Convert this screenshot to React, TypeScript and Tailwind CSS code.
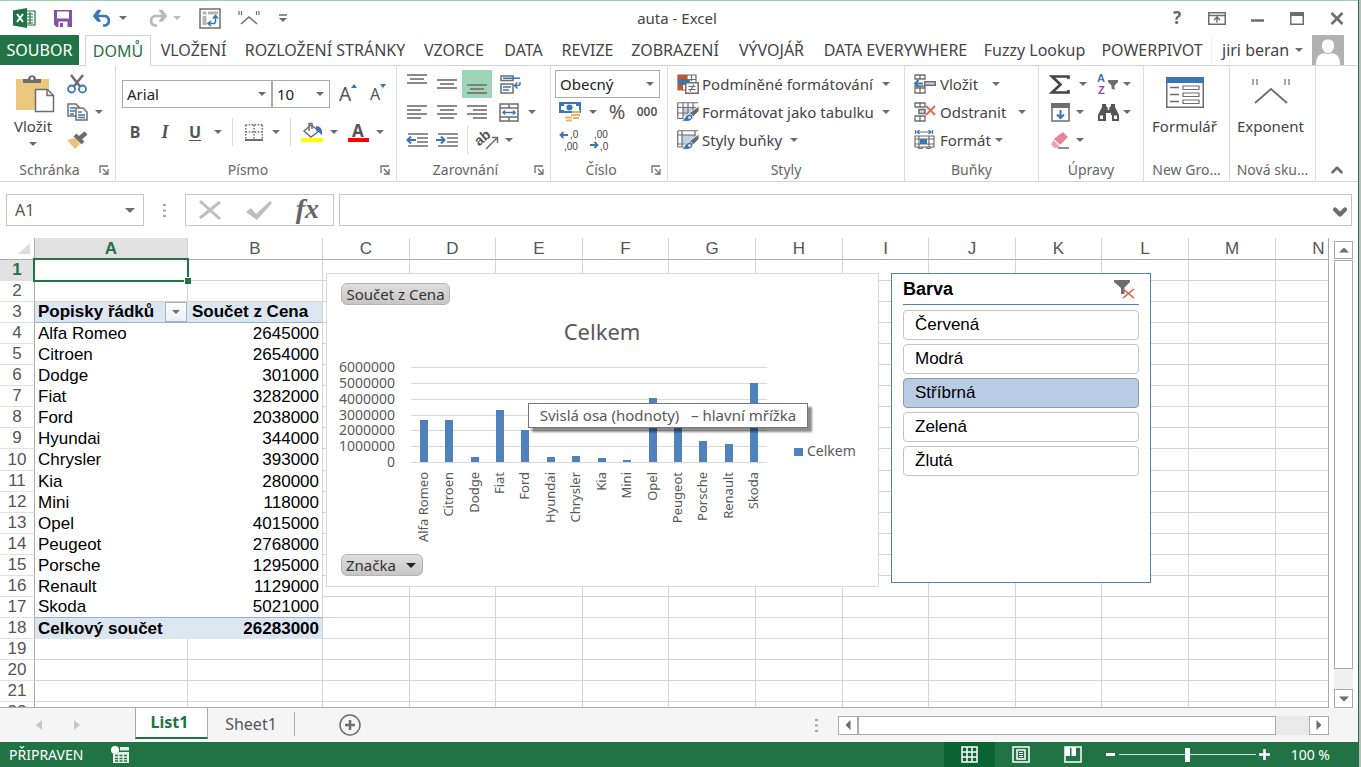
import React from 'react';
import { ChevronDown, ChevronUp } from 'lucide-react';

const GREY = '#6d6d6d';
const BLUE = '#3a76b5';

const Svg: React.FC<{ w: number; h: number; children: React.ReactNode; className?: string }> = ({
  w,
  h,
  children,
  className = '',
}) => (
  <svg
    width={w}
    height={h}
    viewBox={`0 0 ${w} ${h}`}
    fill="none"
    stroke={GREY}
    strokeWidth="1.5"
    className={`shrink-0 overflow-visible ${className}`}
    aria-hidden="true"
  >
    {children}
  </svg>
);

const Arrow: React.FC<{ className?: string }> = ({ className = 'text-[#6d6d6d]' }) => (
  <svg width="8" height="4" viewBox="0 0 8 4" fill="currentColor" className={`shrink-0 ${className}`} aria-hidden="true">
    <path d="M0 0h8L4 4z" />
  </svg>
);

const Tool: React.FC<{ label: string; className?: string; children: React.ReactNode }> = ({
  label,
  className = 'w-[30px]',
  children,
}) => (
  <button type="button" aria-label={label} className={`flex h-7 shrink-0 items-center justify-center ${className}`}>
    {children}
  </button>
);

const Group: React.FC<{ label: string; launcher?: boolean; className: string; children: React.ReactNode }> = ({
  label,
  launcher,
  className,
  children,
}) => (
  <section aria-label={label} className={`flex shrink-0 flex-col border-r border-[#dcdcdc] pb-px ${className}`}>
    <div className="flex-1">{children}</div>
    <div className="flex h-5 items-center text-[14px] leading-5 text-[#666]">
      <span className="flex-1 text-center whitespace-nowrap">{label}</span>
      {launcher && (
        <button type="button" aria-label={`${label} – další možnosti`} className="mr-1 w-3">
          <Svg w={10} h={10}>
            <path d="M1 8V1h8M4 4l4 4M9 4v5H4" strokeWidth="1.3" />
          </Svg>
        </button>
      )}
    </div>
  </section>
);

const Divider = ({ className = '' }) => <span className={`h-7 w-px shrink-0 bg-[#dcdcdc] ${className}`} />;

const Lines: React.FC<{ rows: [number, number, number][]; h?: number }> = ({ rows, h = 18 }) => (
  <Svg w={20} h={h}>
    {rows.map(([x1, x2, y]) => (
      <path key={y} d={`M${x1} ${y}H${x2}`} strokeWidth="1.6" />
    ))}
  </Svg>
);

const Combo: React.FC<{ label: string; value: string; className: string }> = ({ label, value, className }) => (
  <div className={`relative h-7 shrink-0 ${className}`}>
    <select
      aria-label={label}
      defaultValue={value}
      className="h-full w-full appearance-none border border-[#ababab] bg-white pl-1 text-[15px] leading-5 text-[#222]"
    >
      <option>{value}</option>
    </select>
    <Arrow className="pointer-events-none absolute top-3 right-1.5 text-[#6d6d6d]" />
  </div>
);

/* ---------- title bar ---------- */

const TitleBar = () => (
  <header className="grid h-[35px] shrink-0 grid-cols-[1fr_auto_1fr] items-center border-t border-[#9bd0b4] pr-1">
    <div className="flex items-center pl-[13px]">
      <Svg w={23} h={20}>
        <path d="M12 3h10v14H12" stroke="#217346" strokeWidth="1.2" fill="#fff" />
        <path d="M14 6h6M14 9h6M14 12h6M14 15h6M17 4v12" stroke="#217346" strokeWidth="1.2" />
        <path d="M0 2.500L14 0v20L0 17.500z" fill="#217346" stroke="none" />
        <path d="M4 6l6 8M10 6l-6 8" stroke="#fff" strokeWidth="2" />
      </Svg>
      <Tool label="Uložit" className="ml-[17px] w-5">
        <Svg w={20} h={19}>
          <path d="M1 1h18v17H3.500L1 15.500z" fill="#8450a8" stroke="none" />
          <path d="M4 2.500h12v7H4z" fill="#fff" stroke="none" />
          <path d="M5.500 12.500h9V18h-9z" fill="#fff" stroke="none" />
          <path d="M7 14h3v4H7z" fill="#8450a8" stroke="none" />
        </Svg>
      </Tool>
      <Tool label="Zpět" className="ml-5 w-5">
        <Svg w={20} h={17}>
          <path d="M3 6h9.500a5 5 0 0 1 0 9.500H10" stroke={BLUE} strokeWidth="2.500" />
          <path d="M8 0H4.500L0 6l4.500 5.500H8L4.500 6z" fill={BLUE} stroke={BLUE} strokeWidth="0.500" />
        </Svg>
      </Tool>
      <Tool label="Zpět – seznam" className="ml-1 w-3">
        <Arrow />
      </Tool>
      <Tool label="Znovu" className="ml-[18px] w-5">
        <Svg w={20} h={17}>
          <path d="M17 6H7.500a5 5 0 0 0 0 9.500H10" stroke="#b9b9b9" strokeWidth="2.500" />
          <path d="M12 0h3.500L20 6l-4.500 5.500H12L15.500 6z" fill="#b9b9b9" stroke="#b9b9b9" strokeWidth="0.500" />
        </Svg>
      </Tool>
      <Tool label="Znovu – seznam" className="ml-1 w-3">
        <Arrow className="text-[#b9b9b9]" />
      </Tool>
      <Tool label="Kontingenční tabulka" className="ml-4 w-[22px]">
        <Svg w={22} h={21}>
          <path d="M1 1h20v19H1z" strokeWidth="1.500" />
          <path d="M3.500 3.500h4v3h-4zM9 3.500h10v3H9zM3.500 8h4v9h-4z" fill="#b5b5b5" stroke="none" />
          <path d="M9.500 15.500h5a2 2 0 0 0 2-2V8.500M14 10.500l2.500-3 2.500 3M12 13l-3 2.500 3 2.500" stroke={BLUE} strokeWidth="1.600" />
        </Svg>
      </Tool>
      <Tool label="Exponent" className="ml-4 w-6">
        <Svg w={22} h={14}>
          <path d="M3 13l8-7 8 7" />
          <path d="M1 0v4M3.500 0v4M18.500 0v4M21 0v4" strokeWidth="1.200" />
        </Svg>
      </Tool>
      <Tool label="Přizpůsobit panel" className="ml-[14px] w-4">
        <Svg w={8} h={8}>
          <path d="M0 1h8" />
          <path d="M0 4h8L4 8z" fill={GREY} stroke="none" />
        </Svg>
      </Tool>
    </div>
    <h1 className="text-[15px] leading-5 text-[#444]">auta - Excel</h1>
    <div className="flex items-center justify-end pr-[7px]">
      <Tool label="Nápověda" className="w-5 text-[17px] font-bold text-[#666]">
        ?
      </Tool>
      <Tool label="Možnosti zobrazení pásu karet" className="ml-5 w-5">
        <Svg w={18} h={13}>
          <path d="M.75.75h16.500v11.500H.75zM.75 3.500h16.500M9 10.500V5.500M6 8l3-3 3 3" />
        </Svg>
      </Tool>
      <Tool label="Minimalizovat" className="ml-5 w-5">
        <Svg w={13} h={13}>
          <path d="M0 8.500h13" strokeWidth="2.500" />
        </Svg>
      </Tool>
      <Tool label="Maximalizovat" className="ml-5 w-5">
        <Svg w={14} h={13}>
          <path d="M.75.75h12.500v11.500H.75z" />
          <path d="M0 2h14" strokeWidth="4" />
        </Svg>
      </Tool>
      <Tool label="Zavřít" className="ml-5 w-5">
        <Svg w={14} h={13}>
          <path d="M1.500 1l11 11M12.500 1l-11 11" strokeWidth="2.500" />
        </Svg>
      </Tool>
    </div>
  </header>
);

/* ---------- ribbon tabs ---------- */

const tabs = [
  { name: 'VLOŽENÍ', width: 'w-[85px]' },
  { name: 'ROZLOŽENÍ STRÁNKY', width: 'w-[178px]' },
  { name: 'VZORCE', width: 'w-[80px]' },
  { name: 'DATA', width: 'w-[59px]' },
  { name: 'REVIZE', width: 'w-[69px]' },
  { name: 'ZOBRAZENÍ', width: 'w-[106px]' },
  { name: 'VÝVOJÁŘ', width: 'w-[87px]' },
  { name: 'DATA EVERYWHERE', width: 'w-[161px]' },
  { name: 'Fuzzy Lookup', width: 'w-[117px]' },
  { name: 'POWERPIVOT', width: 'w-[118px]' },
];

const Tabs = () => (
  <nav className="flex h-[31px] shrink-0 text-[16px] leading-5 text-[#444]">
    <button type="button" className="mb-px w-[79px] shrink-0 bg-[#217346] text-white">
      SOUBOR
    </button>
    <span className="w-1.5 shrink-0 border-b border-[#d4d4d4]" />
    <button type="button" className="w-[66px] shrink-0 border border-b-0 border-[#d4d4d4] text-[#217346]">
      DOMŮ
    </button>
    {tabs.map((tab) => (
      <button
        key={tab.name}
        type="button"
        className={`shrink-0 border-b border-[#d4d4d4] whitespace-nowrap ${tab.width}`}
      >
        {tab.name}
      </button>
    ))}
    <div className="flex flex-1 items-center border-b border-l border-b-[#d4d4d4] border-l-[#f0f0f0]">
      <button type="button" className="flex items-center gap-1.5 pl-2.5 whitespace-nowrap">
        jiri beran
        <Arrow />
      </button>
      <Svg w={32} h={30} className="mr-3.5 ml-auto">
        <path d="M0 0h32v30H0z" fill="#b1b1b1" stroke="none" />
        <path d="M4 30c0-9 3-12 12-12s12 3 12 12z" fill="#fff" stroke="none" />
        <path d="M16 4c4 0 6.500 2.500 6.500 6.500S20 18.500 16 18.500 9.500 14.500 9.500 10.500 12 4 16 4z" fill="#fff" stroke="#b1b1b1" strokeWidth="1" />
      </Svg>
    </div>
  </nav>
);

/* ---------- ribbon ---------- */

const ClipboardGroup = () => (
  <Group label="Schránka" launcher className="w-[116px]">
    <div className="flex pt-1">
      <button type="button" className="flex w-[66px] flex-col items-center text-[15px] leading-5 text-[#444]">
        <Svg w={40} h={40} className="mt-1 ml-1">
          <path d="M1 5h33v31H1z" fill="#ecc77f" stroke="none" />
          <path d="M8 9V5h5c0-5 8-5 8 0h5v4z" fill={GREY} stroke="none" />
          <circle cx="17" cy="4.500" r="1.500" fill="#fff" stroke="none" />
          <path d="M20.500 15.500h12l6 6v16h-18z" fill="#fff" />
          <path d="M32 15.500v6h6.500" />
        </Svg>
        <span className="mt-0.5 mb-1.5">Vložit</span>
        <Arrow />
      </button>
      <div>
        <Tool label="Vyjmout" className="w-[22px]">
          <Svg w={20} h={20}>
            <path d="M4 1l9.500 12M16 1L6.500 13" strokeWidth="2.500" />
            <circle cx="4.500" cy="15" r="3.500" stroke={BLUE} strokeWidth="1.800" />
            <circle cx="15.500" cy="15" r="3.500" stroke={BLUE} strokeWidth="1.800" />
          </Svg>
        </Tool>
        <div className="flex">
          <Tool label="Kopírovat" className="w-[22px]">
            <Svg w={21} h={18}>
              <path d="M1 1h8l3 3v9H1z" fill="#fff" />
              <path d="M3 5h5M3 8h5M3 11h4" stroke={BLUE} />
              <path d="M9 5h7l4 4v8H9z" fill="#fff" />
              <path d="M11 9h4M11 12h7M11 14.500h7" stroke={BLUE} />
            </Svg>
          </Tool>
          <Tool label="Kopírovat – možnosti" className="w-[22px]">
            <Arrow />
          </Tool>
        </div>
        <Tool label="Kopírovat formát" className="w-[22px]">
          <Svg w={22} h={18}>
            <path d="M1 9l8-2 5 6-5 5z" fill="#ecc077" stroke="none" />
            <path d="M9 4l8 8" strokeWidth="4" />
            <path d="M14 7l6-5" strokeWidth="4.500" />
          </Svg>
        </Tool>
      </div>
    </div>
  </Group>
);

const FontGroup = () => (
  <Group label="Písmo" launcher className="w-[281px]">
    <div className="flex items-center pt-3.5 pl-1.5">
      <Combo label="Písmo" value="Arial" className="w-[150px]" />
      <Combo label="Velikost písma" value="10" className="w-[58px]" />
      <Tool label="Zvětšit písmo" className="ml-1 w-7 text-[19px] text-[#555]">
        A
        <svg width="6" height="4" viewBox="0 0 6 4" className="mb-4" aria-hidden="true">
          <path d="M0 4h6L3 0z" fill={BLUE} />
        </svg>
      </Tool>
      <Tool label="Zmenšit písmo" className="ml-0.5 w-7 text-[16px] text-[#555]">
        A
        <svg width="6" height="4" viewBox="0 0 6 4" className="mb-4" aria-hidden="true">
          <path d="M0 0h6L3 4z" fill={BLUE} />
        </svg>
      </Tool>
    </div>
    <div className="flex items-center pt-2.5 pl-1 text-[16px] text-[#555]">
      <Tool label="Tučné">
        <b>B</b>
      </Tool>
      <Tool label="Kurzíva">
        <i className="font-['Liberation_Serif',serif] text-[18px] font-bold">I</i>
      </Tool>
      <Tool label="Podtržené">
        <b className="underline underline-offset-2">U</b>
      </Tool>
      <Tool label="Podtržené – možnosti" className="w-4">
        <Arrow />
      </Tool>
      <Divider className="mx-1.5" />
      <Tool label="Ohraničení" className="ml-[3px] w-6">
        <Svg w={18} h={17}>
          <path d="M.75.75h16.500M.75 8h16.500M.75 1v15M9 1v15M17.250 1v15" strokeDasharray="1.500 1.500" />
          <path d="M0 16h18" strokeWidth="2" />
        </Svg>
      </Tool>
      <Tool label="Ohraničení – možnosti" className="w-5">
        <Arrow />
      </Tool>
      <Divider className="mr-2 ml-1" />
      <Tool label="Barva výplně" className="ml-px w-6">
        <Svg w={22} h={20}>
          <path d="M3 9l7-6 8 6-8 6z" fill="#fff" />
          <path d="M8 9V1.500h3V7" />
          <path d="M15 4c4 0 7 3 6 9-2-1-3-4-6-4z" fill={BLUE} stroke="none" />
          <path d="M0 16h22v4H0z" fill="#ff0" stroke="none" />
        </Svg>
      </Tool>
      <Tool label="Barva výplně – možnosti" className="w-5">
        <Arrow />
      </Tool>
      <Tool label="Barva písma" className="w-7 flex-col">
        <b className="text-[17px] leading-[15px]">A</b>
        <span className="h-1 w-[21px] bg-[#f00]" />
      </Tool>
      <Tool label="Barva písma – možnosti" className="w-4">
        <Arrow />
      </Tool>
    </div>
  </Group>
);

const AlignGroup = () => (
  <Group label="Zarovnání" launcher className="w-[154px]">
    <div className="pt-1 pl-[5px]">
      <div className="flex">
        <Tool label="Zarovnat nahoru">
          <Lines rows={[[0, 20, 1], [3, 17, 5], [0, 20, 9]]} h={20} />
        </Tool>
        <Tool label="Zarovnat na střed svisle">
          <Lines rows={[[0, 20, 6], [3, 17, 10], [0, 20, 14]]} h={20} />
        </Tool>
        <Tool label="Zarovnat dolů" className="w-[30px] bg-[#9fd5b7]">
          <Lines rows={[[0, 20, 11], [3, 17, 15], [0, 20, 19]]} h={20} />
        </Tool>
        <Tool label="Zalamovat text" className="ml-1 w-[30px]">
          <Svg w={22} h={19}>
            <path d="M1 1h12v4.500H1zM1 9h12v9H1z" />
            <path d="M3 3.300h17M3 12h8M3 15h6M20 7v1.500a2 2 0 0 1-2 2h-3M17.500 7.500l-3 3 3 3" stroke={BLUE} />
          </Svg>
        </Tool>
      </div>
      <div className="flex">
        <Tool label="Zarovnat vlevo">
          <Lines rows={[[0, 20, 3], [0, 14, 7], [0, 20, 11], [0, 14, 15]]} />
        </Tool>
        <Tool label="Zarovnat na střed">
          <Lines rows={[[0, 20, 3], [3, 17, 7], [0, 20, 11], [3, 17, 15]]} />
        </Tool>
        <Tool label="Zarovnat vpravo">
          <Lines rows={[[0, 20, 3], [6, 20, 7], [0, 20, 11], [6, 20, 15]]} />
        </Tool>
        <Tool label="Sloučit a zarovnat na střed" className="ml-1 w-[26px]">
          <Svg w={20} h={19}>
            <path d="M1 1h18v17H1zM1 5h18M1 14h18M10 1v4M10 14v4" />
            <path d="M4 9.500h12M6 7.500l-2 2 2 2M14 7.500l2 2-2 2" stroke={BLUE} />
          </Svg>
        </Tool>
        <Tool label="Sloučit – možnosti" className="w-5">
          <Arrow />
        </Tool>
      </div>
      <div className="flex items-center">
        <Tool label="Zmenšit odsazení">
          <Svg w={22} h={15}>
            <path d="M2 1h20M11 5h11M11 9h11M2 13h20" />
            <path d="M1 7h9M5 3.500L1.500 7 5 10.500" stroke={BLUE} strokeWidth="2" />
          </Svg>
        </Tool>
        <Tool label="Zvětšit odsazení">
          <Svg w={22} h={15}>
            <path d="M2 1h20M11 5h11M11 9h11M2 13h20" />
            <path d="M0 7h9M5 3.500L8.500 7 5 10.500" stroke={BLUE} strokeWidth="2" />
          </Svg>
        </Tool>
        <Divider className="mx-[5px]" />
        <Tool label="Orientace">
          <Svg w={22} h={20}>
            <text
              x="0"
              y="13"
              transform="rotate(-40 6 12)"
              fill="#555"
              stroke="none"
              className="font-['Liberation_Sans',sans-serif] text-[14px] font-bold"
            >
              ab
            </text>
            <path d="M9 19L20 8M15 7.500h5.500V13" />
          </Svg>
        </Tool>
        <Tool label="Orientace – možnosti" className="w-3">
          <Arrow />
        </Tool>
      </div>
    </div>
  </Group>
);

const NumberGroup = () => (
  <Group label="Číslo" launcher className="w-[117px]">
    <div className="pt-1 pl-1">
      <Combo label="Formát čísla" value="Obecný" className="w-[105px]" />
      <div className="flex items-center text-[#555]">
        <Tool label="Účetní formát">
          <Svg w={22} h={20}>
            <path d="M1 1h20v9H1z" stroke={BLUE} strokeWidth="2" fill="#fff" />
            <path d="M0 0h5v4H0zM17 0h5v4h-5zM0 8h5v3H0z" fill={BLUE} stroke="none" />
            <circle cx="10.500" cy="5.500" r="3" fill={BLUE} stroke="none" />
            <path d="M13 10.500h8M13 13.500h8M6 16h8M6 19h7M15 16.500h5" stroke="#fff" strokeWidth="4" />
            <path d="M13 10h8M12 13h9M6 15.500h7M7 18.500h6M14 16h6" stroke="#e8b566" strokeWidth="2" />
          </Svg>
        </Tool>
        <Tool label="Účetní formát – možnosti" className="w-4">
          <Arrow />
        </Tool>
        <Tool label="Styl procent" className="w-8 text-[20px]">
          %
        </Tool>
        <Tool label="Styl čárky" className="w-7 text-[12px] font-semibold">
          000
        </Tool>
      </div>
      <div className="flex">
        <Tool label="Přidat desetinné místo">
          <Svg w={22} h={22}>
            <path d="M1 6h8M4.500 3L1.500 6l3 3" stroke={BLUE} strokeWidth="1.800" />
            <g fill="#444" stroke="none" className="font-['Liberation_Sans',sans-serif] text-[10px]">
              <text x="11" y="9">,0</text>
              <text x="5" y="21">,00</text>
            </g>
          </Svg>
        </Tool>
        <Tool label="Odebrat desetinné místo">
          <Svg w={22} h={22}>
            <path d="M1 16h8M5.500 13l3 3-3 3" stroke={BLUE} strokeWidth="1.800" />
            <g fill="#444" stroke="none" className="font-['Liberation_Sans',sans-serif] text-[10px]">
              <text x="5" y="9">,00</text>
              <text x="11" y="21">,0</text>
            </g>
          </Svg>
        </Tool>
      </div>
    </div>
  </Group>
);

const Brush = () => (
  <>
    <path d="M22 4v5l-7 7-4-4z" fill={GREY} stroke="#fff" strokeWidth="0.800" />
    <path d="M4 19c4-1 4-7 9-7 5 1 3 7-3 7.500z" fill={BLUE} stroke="#fff" strokeWidth="0.800" />
    <circle cx="12.500" cy="15.500" r="1.300" fill="#fff" stroke="none" />
  </>
);

const StylesGroup = () => (
  <Group label="Styly" className="w-[237px]">
    <div className="pt-1 pl-[9px] text-[15px] leading-5 whitespace-nowrap text-[#444]">
      <button type="button" className="flex h-7 w-[213px] items-center">
        <Svg w={22} h={20} className="mr-[3px]">
          <path d="M1 1h18v15H1zM10 1v15M14.500 1v6M1 5.500h18M1 10.500h9" strokeWidth="1.200" />
          <path d="M1 1h9v4H1z" fill="#d0502b" stroke="none" />
          <path d="M1 6h12v4H1z" fill={BLUE} stroke="none" />
          <path d="M1 11h5v5H1z" fill="#d0502b" stroke="none" />
          <path d="M8.750 8.750h12.500v10.500H8.750z" fill="#fff" />
          <path d="M11.500 12.500h7M11.500 15.500h7M17 10.500l-4 7" strokeWidth="1.200" />
        </Svg>
        Podmíněné formátování
        <Arrow className="ml-auto text-[#6d6d6d]" />
      </button>
      <button type="button" className="flex h-7 w-[213px] items-center">
        <Svg w={22} h={20} className="mr-[3px]">
          <path d="M6 6h12v8H6z" fill="#bdd2ea" stroke="none" />
          <path d="M.75.75h20.500M.75 16.500V.75M.75 5.500h18M.75 11h12M.75 16.500h6M6 1v15M11 1v12M16 1v8" strokeWidth="1.200" />
          <Brush />
        </Svg>
        Formátovat jako tabulku
        <Arrow className="ml-auto text-[#6d6d6d]" />
      </button>
      <button type="button" className="flex h-7 items-center">
        <Svg w={22} h={20} className="mr-[3px]">
          <path d="M5 5h13v8H5z" fill="#bdd2ea" stroke="none" />
          <path d="M.75.75h20.500M.75 17V.75M.75 5h18M.75 14h9M.75 17h6M5 1v16M18 1v7" strokeWidth="1.200" />
          <Brush />
        </Svg>
        Styly buňky
        <Arrow className="ml-2 text-[#6d6d6d]" />
      </button>
    </div>
  </Group>
);

const CellsGroup = () => (
  <Group label="Buňky" className="w-[134px]">
    <div className="pt-1 pl-[9px] text-[15px] leading-5 whitespace-nowrap text-[#444]">
      <button type="button" className="flex h-7 items-center">
        <Svg w={22} h={20} className="mr-1">
          <path d="M1 1h10v4H1zM6 1v4M1 14h10v5H1zM6 12v7M1 14v-2h10v2" strokeWidth="1.300" />
          <path d="M10.750 7.750h10.500v3.500H10.750z" fill="#c5d8ec" />
          <path d="M1 9.500h8M4.500 6L1 9.500 4.500 13" stroke={BLUE} strokeWidth="2" />
        </Svg>
        Vložit
        <Arrow className="ml-3.5 text-[#6d6d6d]" />
      </button>
      <button type="button" className="flex h-7 items-center">
        <Svg w={22} h={20} className="mr-1">
          <path d="M1 1h10v4H1zM6 1v4M1 14h10v5H1zM6 14v5" strokeWidth="1.300" />
          <path d="M5 7.500h6v4H5z" fill="#c5d8ec" />
          <path d="M12 4l9 9M21 4l-9 9" stroke="#e0694a" strokeWidth="1.800" />
        </Svg>
        Odstranit
        <Arrow className="ml-3 text-[#6d6d6d]" />
      </button>
      <button type="button" className="flex h-7 items-center">
        <Svg w={22} h={20} className="mr-1">
          <path d="M1.500 0v4M18.500 0v4M3 2h14M5.500 0L3 2l2.500 2M14.500 0L17 2l-2.500 2" stroke={BLUE} strokeWidth="1.200" />
          <path d="M1 6h19v11H1zM1 9h19M1 14h19M5 6v11M15 6v11M4 17c0 2 5 2 5 0M12 17c0 2 5 2 5 0" strokeWidth="1.200" />
          <path d="M6 9h7v5H6z" fill={BLUE} stroke="none" />
        </Svg>
        Formát
        <Arrow className="ml-1 text-[#6d6d6d]" />
      </button>
    </div>
  </Group>
);

const EditGroup = () => (
  <Group label="Úpravy" className="w-[105px]">
    <div className="pt-1 pl-1.5">
      <div className="flex">
        <Tool label="Automatické shrnutí">
          <Svg w={20} h={19}>
            <path d="M18.500 4V1.500H2L10.500 9.500 2 17.500h16.500V15" stroke="#444" strokeWidth="2.600" />
          </Svg>
        </Tool>
        <Tool label="Shrnutí – možnosti" className="w-4">
          <Arrow />
        </Tool>
        <Tool label="Seřadit a filtrovat" className="ml-1 w-[26px]">
          <Svg w={22} h={22}>
            <g stroke="none" className="font-['Liberation_Sans',sans-serif] text-[11px] font-bold">
              <text x="0" y="9" fill={BLUE}>A</text>
              <text x="1" y="21" fill="#8450a8">Z</text>
            </g>
            <path d="M11 7h10v2l-3.500 3.500V17l-3-1.500v-3L11 9z" fill={GREY} stroke="none" />
          </Svg>
        </Tool>
        <Tool label="Seřadit – možnosti" className="w-3">
          <Arrow />
        </Tool>
      </div>
      <div className="flex">
        <Tool label="Vyplnit">
          <Svg w={19} h={19}>
            <path d="M1 1h17v17H1z" />
            <path d="M0 0h19v5H0z" fill={GREY} stroke="none" />
            <path d="M9.500 7v8M6 11.500l3.500 3.500 3.500-3.500" stroke={BLUE} strokeWidth="2" />
          </Svg>
        </Tool>
        <Tool label="Vyplnit – možnosti" className="w-2.5">
          <Arrow />
        </Tool>
        <Tool label="Najít a vybrat" className="ml-2.5 w-[26px]">
          <Svg w={21} h={17}>
            <path d="M4 0h4v2l2 2h1l2-2V0h4v3l4 8v6h-7v-6h-1v-2h-5v2H8v6H0v-6l4-8z" fill="#555" stroke="none" />
            <path d="M2 11.500h3V15H2zM16 11.500h3V15h-3z" fill="#fff" stroke="none" />
            <path d="M10.500 4v2" stroke="#fff" />
          </Svg>
        </Tool>
        <Tool label="Najít – možnosti" className="w-3">
          <Arrow />
        </Tool>
      </div>
      <div className="flex">
        <Tool label="Vymazat">
          <Svg w={20} h={17}>
            <path d="M9 3l4-3 5 5-8 8-6-6z" fill="#e58494" stroke="none" />
            <path d="M3.500 8l6 6-2 2H4.500L1 12.500z" fill="#eba6b1" stroke="none" />
            <path d="M8 16h11" />
          </Svg>
        </Tool>
        <Tool label="Vymazat – možnosti" className="w-2.5">
          <Arrow />
        </Tool>
      </div>
    </div>
  </Group>
);

const Ribbon = () => (
  <div className="flex h-[116px] shrink-0 border-b border-[#d4d4d4]">
    <ClipboardGroup />
    <FontGroup />
    <AlignGroup />
    <NumberGroup />
    <StylesGroup />
    <CellsGroup />
    <EditGroup />
    <Group label="New Gro..." className="w-[86px]">
      <button type="button" className="flex w-full flex-col items-center pt-[11px] pr-1 text-[15px] leading-5 text-[#444]">
        <Svg w={38} h={31}>
          <path d="M.75.75h36.500v29.500H.75z" fill="#fff" />
          <path d="M0 0h38v6H0z" fill={BLUE} stroke="none" />
          <path d="M4 10.500h9M4 17.500h9M4 24.500h9" />
          <path d="M17 9h16v3.500H17zM17 16h16v3.500H17zM17 23h16v3.500H17z" strokeWidth="1.200" />
        </Svg>
        <span className="mt-2">Formulář</span>
      </button>
    </Group>
    <Group label="Nová sku..." className="w-[86px]">
      <button type="button" className="flex w-full flex-col items-center pt-[11px] pr-1 text-[15px] leading-5 text-[#444]">
        <Svg w={38} h={31}>
          <path d="M3 26l16-14 16 14" strokeWidth="1.800" />
          <path d="M1 2v6M5 2v6M33 2v6M37 2v6" strokeWidth="1.200" />
        </Svg>
        <span className="mt-2">Exponent</span>
      </button>
    </Group>
    <button type="button" aria-label="Sbalit pás karet" className="mt-auto mr-3 mb-0.5 ml-auto">
      <ChevronUp size={18} strokeWidth={3.5} color={GREY} />
    </button>
  </div>
);

const Dots = ({ className = '' }) => (
  <svg width="3" height="13" viewBox="0 0 3 13" fill="#a5a5a5" className={`shrink-0 ${className}`} aria-hidden="true">
    <path d="M0 0h3v2H0zM0 5.500h3v2H0zM0 11h3v2H0z" />
  </svg>
);

const FormulaBar = () => (
  <div className="flex h-14 shrink-0 items-start pt-3 pr-1.5 pl-1.5">
    <label className="flex h-8 w-[138px] items-center border border-[#c6c6c6] pr-2">
      <input
        aria-label="Pole názvů"
        defaultValue="A1"
        className="w-full min-w-0 pl-2 text-[16px] leading-5 text-[#555] outline-none"
      />
      <svg width="10" height="5" viewBox="0 0 10 5" fill={GREY} className="shrink-0" aria-hidden="true">
        <path d="M0 0h10L5 5z" />
      </svg>
    </label>
    <Dots className="mx-[19px] mt-2.5" />
    <div className="flex h-8 w-[149px] shrink-0 items-center justify-between border border-[#c6c6c6] pr-3.5 pl-3">
      <button type="button" aria-label="Storno">
        <Svg w={24} h={20}>
          <path d="M2 1l20 18M22 2L2 18" stroke="#bdbdbd" strokeWidth="3" />
        </Svg>
      </button>
      <button type="button" aria-label="Zadat">
        <Svg w={26} h={20}>
          <path d="M0 12l5-4 5 6L24 1l2 2-15 17z" fill="#bdbdbd" stroke="none" />
        </Svg>
      </button>
      <button
        type="button"
        aria-label="Vložit funkci"
        className="pb-0.5 font-['Liberation_Serif',serif] text-[28px] leading-7 font-bold text-[#666] italic"
      >
        fx
      </button>
    </div>
    <div className="ml-[5px] flex h-8 flex-1 items-center border border-[#c6c6c6]">
      <input aria-label="Řádek vzorců" className="h-full min-w-0 flex-1 px-2 text-[15px] outline-none" />
      <button type="button" aria-label="Rozbalit řádek vzorců" className="mr-px pt-1">
        <ChevronDown size={20} strokeWidth={5} color={GREY} />
      </button>
    </div>
  </div>
);

/* ---------- sheet ---------- */

const columns = [
  { name: 'A', width: 'w-[153px]' },
  { name: 'B', width: 'w-[135px]' },
  { name: 'C', width: 'w-[87px]' },
  { name: 'D', width: 'w-[86px]' },
  { name: 'E', width: 'w-[87px]' },
  { name: 'F', width: 'w-[86px]' },
  { name: 'G', width: 'w-[87px]' },
  { name: 'H', width: 'w-[87px]' },
  { name: 'I', width: 'w-[86px]' },
  { name: 'J', width: 'w-[87px]' },
  { name: 'K', width: 'w-[86px]' },
  { name: 'L', width: 'w-[87px]' },
  { name: 'M', width: 'w-[87px]' },
  { name: 'N', width: 'w-[86px]' },
];

const sales = [
  { brand: 'Alfa Romeo', total: 2645000 },
  { brand: 'Citroen', total: 2654000 },
  { brand: 'Dodge', total: 301000 },
  { brand: 'Fiat', total: 3282000 },
  { brand: 'Ford', total: 2038000 },
  { brand: 'Hyundai', total: 344000 },
  { brand: 'Chrysler', total: 393000 },
  { brand: 'Kia', total: 280000 },
  { brand: 'Mini', total: 118000 },
  { brand: 'Opel', total: 4015000 },
  { brand: 'Peugeot', total: 2768000 },
  { brand: 'Porsche', total: 1295000 },
  { brand: 'Renault', total: 1129000 },
  { brand: 'Skoda', total: 5021000 },
];

const blankCell = 'border-r border-b border-[#d4d4d4]';

const PivotCells: React.FC<{ row: number }> = ({ row }) => {
  if (row === 1) {
    return (
      <>
        <td className={`relative ${blankCell}`}>
          <span className="absolute -inset-0.5 border-2 border-[#217346]" />
          <span className="absolute -right-1 -bottom-1 size-[7px] border-t border-l border-white bg-[#217346]" />
        </td>
        <td className={blankCell} />
      </>
    );
  }
  if (row === 3) {
    return (
      <>
        <td className="border-b border-[#95b3d7] bg-[#dce6f1] py-0 pr-0 pl-[3px] font-bold">
          <div className="flex h-5 items-center justify-between">
            Popisky řádků
            <button
              type="button"
              aria-label="Filtr řádků"
              className="mr-px flex h-5 w-[22px] items-center justify-center border border-[#a9b4c2] bg-gradient-to-b from-white to-[#eceff3]"
            >
              <Arrow />
            </button>
          </div>
        </td>
        <td className="border-r border-b border-[#95b3d7] border-r-[#d4d4d4] bg-[#dce6f1] pl-1 font-bold">
          Součet z Cena
        </td>
      </>
    );
  }
  if (row >= 4 && row <= 17) {
    const { brand, total } = sales[row - 4];
    const line = row === 17 ? 'border-b border-b-[#95b3d7]' : '';
    return (
      <>
        <td className={`pl-[3px] ${line}`}>{brand}</td>
        <td className={`border-r border-r-[#d4d4d4] pr-[3px] text-right ${line}`}>{total}</td>
      </>
    );
  }
  if (row === 18) {
    return (
      <>
        <td className="bg-[#dce6f1] pl-[3px] font-bold">Celkový součet</td>
        <td className="border-r border-r-[#d4d4d4] bg-[#dce6f1] pr-[3px] text-right font-bold">26283000</td>
      </>
    );
  }
  return (
    <>
      <td className={blankCell} />
      <td className={blankCell} />
    </>
  );
};

const Grid = () => (
  <table className="w-[1362px] table-fixed border-separate border-spacing-0 font-['Liberation_Sans',Arial,sans-serif] text-[17px] leading-5 whitespace-nowrap text-black">
    <colgroup>
      <col className="w-[35px]" />
      {columns.map((c) => (
        <col key={c.name} className={c.width} />
      ))}
    </colgroup>
    <thead>
      <tr>
        <th className="h-[22px] border-r border-b border-[#ababab] p-0">
          <svg width="12" height="11" viewBox="0 0 12 11" className="mr-1 ml-auto" aria-hidden="true">
            <path d="M12 0v11H0z" fill="#dcdcdc" />
          </svg>
        </th>
        {columns.map((c) => (
          <th
            key={c.name}
            scope="col"
            className={`h-[22px] border-r border-b border-r-[#d4d4d4] border-b-[#ababab] p-0 ${
              c.name === 'A' ? 'bg-[#e1e1e1] font-bold text-[#217346]' : 'font-normal text-[#555]'
            }`}
          >
            {c.name}
          </th>
        ))}
      </tr>
    </thead>
    <tbody>
      {Array.from({ length: 22 }, (_, i) => i + 1).map((row) => (
        <tr key={row}>
          <th
            scope="row"
            className={`border-r border-b border-r-[#ababab] border-b-[#e1e1e1] p-0 ${
              row === 10 ? 'h-[22px]' : 'h-[21px]'
            } ${row === 1 ? 'bg-[#e1e1e1] font-bold text-[#217346]' : 'font-normal text-[#555]'}`}
          >
            {row}
          </th>
          <PivotCells row={row} />
          {columns.slice(2).map((c) => (
            <td key={c.name} className={blankCell} />
          ))}
        </tr>
      ))}
    </tbody>
  </table>
);

const ticks = [6000000, 5000000, 4000000, 3000000, 2000000, 1000000, 0];
const plot = { left: 84, right: 440, top: 94, bottom: 189 };
const step = (plot.right - plot.left) / sales.length;

const PivotChart = () => (
  <figure className="absolute top-[35px] left-[326px] h-[314px] w-[553px] border border-[#d9d9d9] bg-white">
    <svg width="551" height="312" viewBox="0 0 551 312" className="font-['Noto_Sans',sans-serif]" role="img" aria-label="Celkem">
      <text x="275" y="66" textAnchor="middle" fill="#595959" className="text-[22px]">
        Celkem
      </text>
      {ticks.map((tick) => {
        const y = Math.round(plot.bottom - (tick / 6000000) * (plot.bottom - plot.top)) - 0.5;
        return (
          <g key={tick}>
            <path d={`M${plot.left} ${y}H${plot.right}`} stroke="#d9d9d9" />
            <text x="68" y={y + 4} textAnchor="end" fill="#595959" className="text-[14px]">
              {tick}
            </text>
          </g>
        );
      })}
      {sales.map(({ brand, total }, i) => {
        const x = Math.round(plot.left + step * (i + 0.5));
        const h = Math.max(1, Math.round((total / 6000000) * (plot.bottom - plot.top)));
        return (
          <g key={brand}>
            <rect x={x - 4} y={plot.bottom - h - 1} width="8" height={h} fill="#4f81bd" />
            <text transform={`translate(${x + 4} 198) rotate(-90)`} textAnchor="end" fill="#595959" className="text-[13px]">
              {brand}
            </text>
          </g>
        );
      })}
      <rect x="467" y="174" width="9" height="8" fill="#4f81bd" />
      <text x="480" y="182" fill="#595959" className="text-[14px]">
        Celkem
      </text>
    </svg>
    <button
      type="button"
      className="absolute top-[9px] left-3.5 h-[22px] w-[109px] rounded-md border border-[#b3b3b3] bg-gradient-to-b from-[#dedede] to-[#c6c6c6] text-[15px] leading-5 whitespace-nowrap text-[#333]"
    >
      Součet z Cena
    </button>
    <button
      type="button"
      className="absolute top-[280px] left-3.5 flex h-[22px] w-[82px] items-center justify-between rounded-md border border-[#b3b3b3] bg-gradient-to-b from-[#dedede] to-[#c6c6c6] pr-1.5 pl-1 text-[15px] leading-5 text-[#333]"
    >
      Značka
      <svg width="10" height="5" viewBox="0 0 10 5" fill="#222" aria-hidden="true">
        <path d="M0 0h10L5 5z" />
      </svg>
    </button>
    <div
      role="tooltip"
      className="absolute top-[129px] left-[201px] h-[25px] w-[280px] border border-[#767676] bg-white text-center text-[15px] leading-[22px] whitespace-pre text-[#575757] shadow-[4px_4px_2px_rgba(0,0,0,0.45)]"
    >
      {'Svislá osa (hodnoty)   – hlavní mřížka'}
    </div>
  </figure>
);

const colours = ['Červená', 'Modrá', 'Stříbrná', 'Zelená', 'Žlutá'];

const Slicer = () => (
  <aside className="absolute top-[35px] left-[891px] h-[310px] w-[260px] border border-[#4f81bd] bg-white px-[11px] font-['Liberation_Sans',Arial,sans-serif] text-black">
    <div className="flex h-[31px] items-center justify-between border-b border-[#4f81bd] pr-1">
      <h2 className="text-[18px] leading-5 font-bold">Barva</h2>
      <button type="button" aria-label="Vymazat filtr">
        <Svg w={21} h={19}>
          <path d="M0 0h16v2l-5.500 5.500V14H7V8L0 2z" fill={GREY} stroke="none" />
          <path d="M9 9l11 9M20 9L9 18" stroke="#d9593a" strokeWidth="1.600" />
        </Svg>
      </button>
    </div>
    <div className="flex flex-col gap-1 pt-[5px]">
      {colours.map((colour) => (
        <button
          key={colour}
          type="button"
          className={`h-[30px] rounded-[4px] border pl-[11px] text-left text-[17px] leading-5 ${
            colour === 'Stříbrná' ? 'border-[#8f98a3] bg-[#b8cce4]' : 'border-[#c4c4c4] bg-white'
          }`}
        >
          {colour}
        </button>
      ))}
    </div>
  </aside>
);

const ScrollButton: React.FC<{ label: string; path: string; className?: string }> = ({ label, path, className = '' }) => (
  <button
    type="button"
    aria-label={label}
    className={`flex shrink-0 items-center justify-center border border-[#ababab] bg-white ${className}`}
  >
    <svg width="10" height="10" viewBox="0 0 10 10" fill={GREY} aria-hidden="true">
      <path d={path} />
    </svg>
  </button>
);

const Sheet = () => (
  <main className="flex min-h-0 flex-1">
    <div className="relative min-w-0 flex-1 overflow-hidden border-r border-b border-[#ababab]">
      <Grid />
      <PivotChart />
      <Slicer />
    </div>
    <div className="mx-[5px] flex w-[19px] flex-col pt-[3px]">
      <ScrollButton label="Nahoru" path="M0 7.500h10L5 2.500z" className="h-[18px]" />
      <div className="mt-px flex-1 border border-[#ababab] bg-white" />
      <div className="h-5 bg-[#f0f0f0]" />
      <ScrollButton label="Dolů" path="M0 2.500h10L5 7.500z" className="h-[19px]" />
    </div>
  </main>
);

const SheetTabs = () => (
  <div className="flex h-[34px] shrink-0 bg-[#f5f5f5] text-[16px] leading-5">
    <div className="flex w-[135px] items-center gap-8 pl-9">
      <button type="button" aria-label="Předchozí list">
        <svg width="6" height="10" viewBox="0 0 6 10" fill="#c6c6c6" aria-hidden="true">
          <path d="M6 0v10L0 5z" />
        </svg>
      </button>
      <button type="button" aria-label="Další list">
        <svg width="6" height="10" viewBox="0 0 6 10" fill="#c6c6c6" aria-hidden="true">
          <path d="M0 0v10l6-5z" />
        </svg>
      </button>
    </div>
    <button
      type="button"
      className="-mt-px h-8 w-[73px] border-x border-b-2 border-x-[#ababab] border-b-[#217346] bg-white pr-1 font-bold text-[#217346]"
    >
      List1
    </button>
    <button type="button" className="mt-1 mb-1.5 w-[87px] border-r border-[#ababab] text-[#555]">
      Sheet1
    </button>
    <button type="button" aria-label="Nový list" className="ml-11">
      <Svg w={22} h={22}>
        <circle cx="11" cy="11" r="10" />
        <path d="M11 6v10M6 11h10" strokeWidth="2.500" />
      </Svg>
    </button>
    <div className="mr-[29px] ml-auto flex items-center">
      <Dots className="mr-5" />
      <ScrollButton label="Vlevo" path="M7.500 0v10L2.500 5z" className="h-[19px] w-5" />
      <div className="h-[19px] w-[418px] border border-[#ababab] bg-white" />
      <div className="h-[19px] w-[33px] bg-[#e9e9e9]" />
      <ScrollButton label="Vpravo" path="M2.500 0v10l5-5z" className="h-[19px] w-5" />
    </div>
  </div>
);

const StatusBar = () => (
  <footer className="flex h-[25px] shrink-0 items-center bg-[#217346] pl-[9px] text-[14px] leading-5 text-white">
    PŘIPRAVEN
    <Svg w={18} h={17} className="ml-7">
      <circle cx="4" cy="4" r="4" fill="#fff" stroke="none" />
      <path d="M9 1h9v3.500H9zM2 8v9h16V6H8z" fill="#e6f0ea" stroke="none" />
      <path d="M4 9.500h12M4 12.500h12M4 15h12" stroke="#217346" strokeWidth="1.500" strokeDasharray="3 1.500" />
    </Svg>
    <div className="ml-auto flex h-full items-center">
      <button type="button" aria-label="Normální" className="flex h-full w-[51px] items-center justify-center bg-[#0a6332]">
        <Svg w={17} h={17}>
          <path d="M1 1h15v15H1zM6 1v15M11 1v15M1 6h15M1 11h15" stroke="#fff" />
        </Svg>
      </button>
      <button type="button" aria-label="Rozložení stránky" className="flex h-full w-[52px] items-center justify-center">
        <Svg w={18} h={17}>
          <path d="M1 1h16v15H1zM5 4h8v9H5z" stroke="#fff" />
          <path d="M7 6.500h4M7 8.500h4M7 10.500h4" stroke="#fff" strokeWidth="1" />
        </Svg>
      </button>
      <button type="button" aria-label="Konce stránek" className="flex h-full w-[52px] items-center justify-center">
        <Svg w={18} h={17}>
          <path d="M1 1h16v15H1z" stroke="#fff" />
          <path d="M1 1h5v9H1zM7.500 1H12v9H7.500z" fill="#fff" stroke="none" />
        </Svg>
      </button>
      <button type="button" aria-label="Oddálit" className="ml-1 flex w-4 justify-center">
        <Svg w={9} h={9}>
          <path d="M0 4.500h9" stroke="#fff" strokeWidth="3" />
        </Svg>
      </button>
      <input
        type="range"
        aria-label="Lupa"
        min="0"
        max="100"
        defaultValue="50"
        className="h-4 w-[137px] appearance-none bg-transparent bg-[linear-gradient(#d3e3da,#d3e3da)] bg-[length:100%_1px] bg-center bg-no-repeat [&::-webkit-slider-thumb]:h-3.5 [&::-webkit-slider-thumb]:w-[5px] [&::-webkit-slider-thumb]:appearance-none [&::-webkit-slider-thumb]:bg-white"
      />
      <button type="button" aria-label="Přiblížit" className="flex w-[18px] justify-center">
        <Svg w={11} h={11}>
          <path d="M0 5.500h11M5.500 0v11" stroke="#fff" strokeWidth="2.500" />
        </Svg>
      </button>
      <span className="mr-7 ml-[17px] whitespace-nowrap">100 %</span>
    </div>
  </footer>
);

const App: React.FC = () => (
  <div className="h-screen bg-[#b9bdbb] pr-0.5 font-['Noto_Sans','Open_Sans',sans-serif]">
    <div className="flex h-full flex-col overflow-hidden border-r border-[#217346] bg-white">
      <TitleBar />
      <Tabs />
      <Ribbon />
      <FormulaBar />
      <Sheet />
      <SheetTabs />
      <StatusBar />
    </div>
  </div>
);

export default App;
